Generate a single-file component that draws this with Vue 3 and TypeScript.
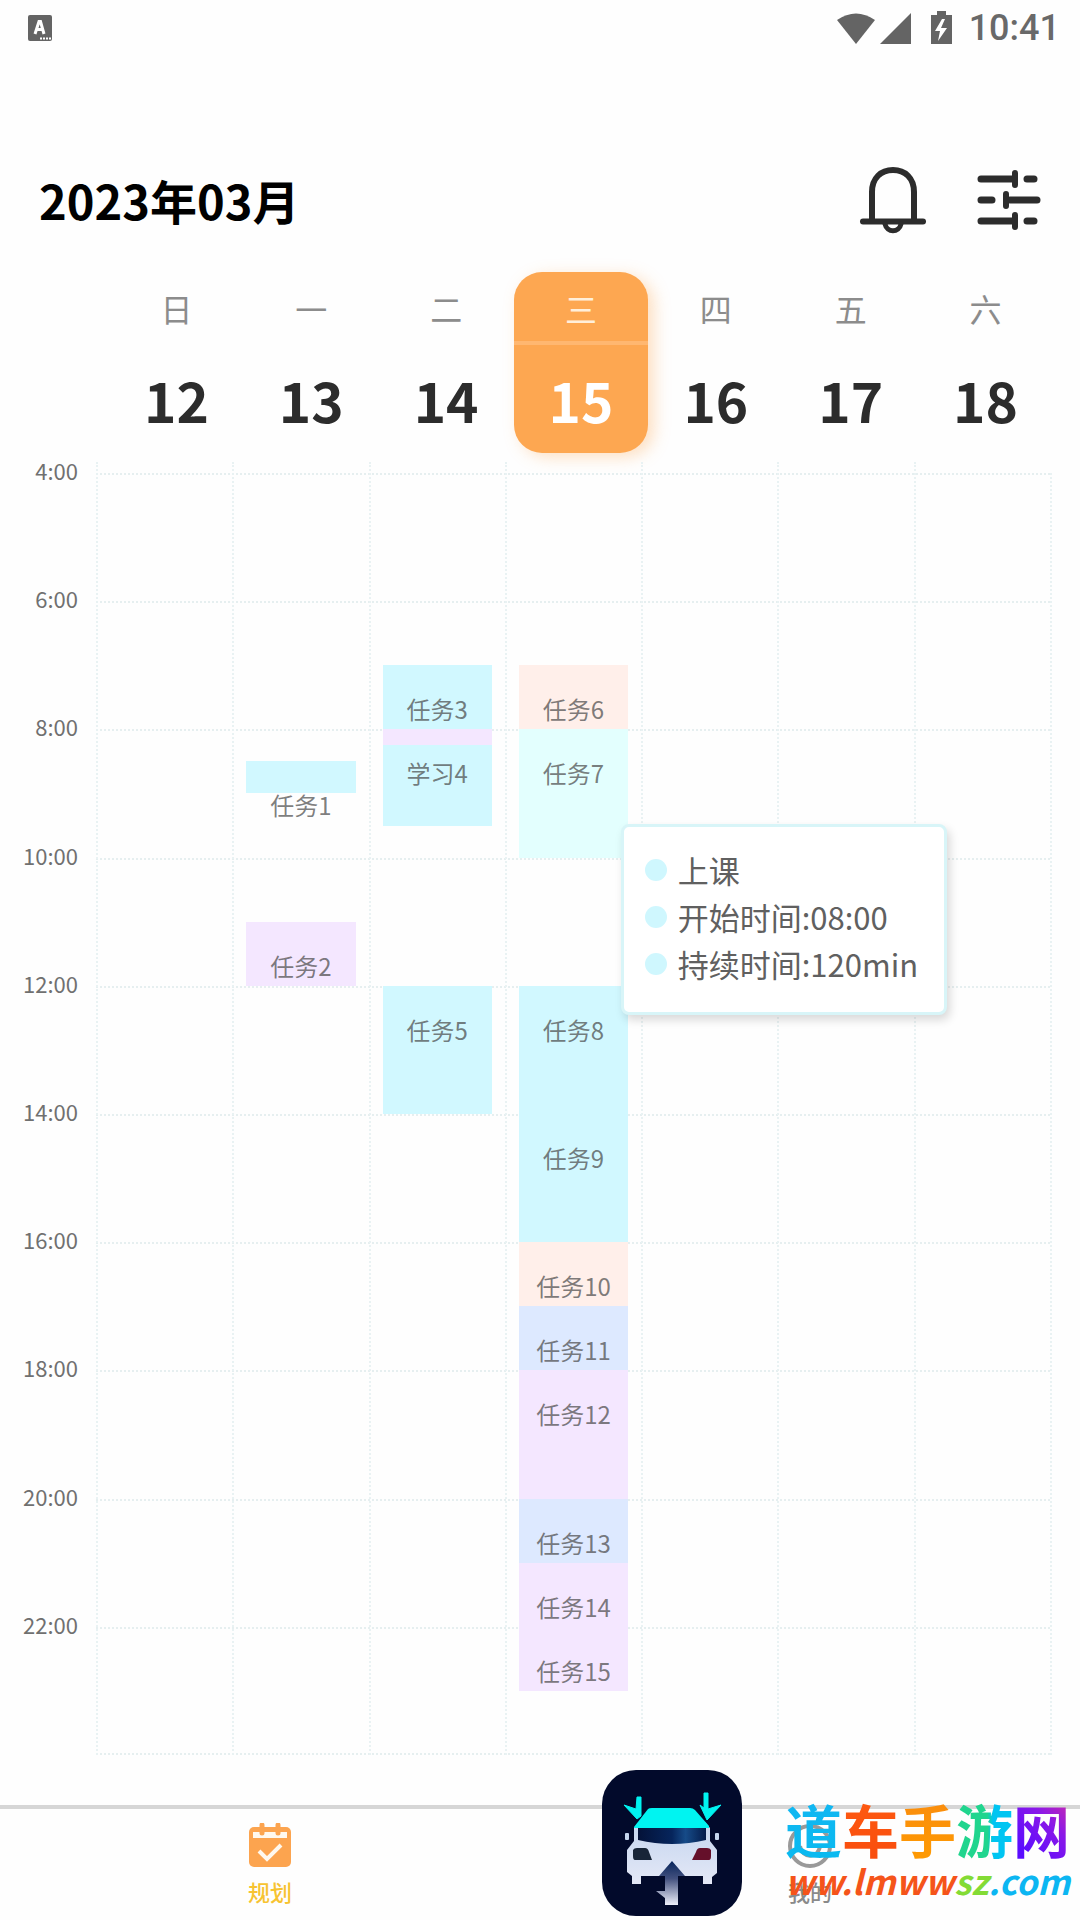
<script setup lang="ts">
import { ref } from 'vue'

interface Day { name: string; date: number }
interface Task { label: string; day: number; start: number; end: number; tone: string }

const days: Day[] = [
  { name: '日', date: 12 },
  { name: '一', date: 13 },
  { name: '二', date: 14 },
  { name: '三', date: 15 },
  { name: '四', date: 16 },
  { name: '五', date: 17 },
  { name: '六', date: 18 },
]
const selected = ref(15)

const firstHour = 4
const hours = [4, 6, 8, 10, 12, 14, 16, 18, 20, 22]

const tasks: Task[] = [
  { label: '任务1', day: 1, start: 8.5, end: 9, tone: 'cyan' },
  { label: '任务2', day: 1, start: 11, end: 12, tone: 'purple' },
  { label: '任务3', day: 2, start: 7, end: 8, tone: 'cyan' },
  { label: '学习4', day: 2, start: 8, end: 9.5, tone: 'cyan' },
  { label: '', day: 2, start: 8, end: 8.25, tone: 'purple' },
  { label: '任务5', day: 2, start: 12, end: 14, tone: 'cyan' },
  { label: '任务6', day: 3, start: 7, end: 8, tone: 'peach' },
  { label: '任务7', day: 3, start: 8, end: 10, tone: 'mint' },
  { label: '任务8', day: 3, start: 12, end: 14, tone: 'cyan' },
  { label: '任务9', day: 3, start: 14, end: 16, tone: 'cyan' },
  { label: '任务10', day: 3, start: 16, end: 17, tone: 'peach' },
  { label: '任务11', day: 3, start: 17, end: 18, tone: 'blue' },
  { label: '任务12', day: 3, start: 18, end: 20, tone: 'purple' },
  { label: '任务13', day: 3, start: 20, end: 21, tone: 'blue' },
  { label: '任务14', day: 3, start: 21, end: 22, tone: 'purple' },
  { label: '任务15', day: 3, start: 22, end: 23, tone: 'purple' },
]

const details = ['上课', '开始时间:08:00', '持续时间:120min']

// The canvas is divided into quarter-hour rows.
const rowOf = (hour: number) => (hour - firstHour) * 4 + 1
const place = (t: Task) => ({
  gridColumn: String(t.day + 1),
  gridRow: `${rowOf(t.start)} / ${rowOf(t.end)}`,
})
</script>

<template>
  <div class="app">
    <div class="status">
      <svg class="app-mark" width="26" height="28" viewBox="0 0 26 28" aria-hidden="true">
        <rect x="1" y="1" width="24" height="26" rx="2" fill="#646464" />
        <path d="M8 20 12 7.500h1.500L17 20M9.500 15.500h6.500" fill="none" stroke="#fff" stroke-width="3" />
        <path d="M13 24.500h11" stroke="#fff" stroke-width="2" stroke-dasharray="2 1" />
      </svg>
      <div class="status-right">
        <svg width="115" height="36" viewBox="0 0 115 36" fill="#646464" aria-hidden="true">
          <path d="M0 10Q19-3 38 10L19 34Z" />
          <path d="M43 34 74 3V34Z" />
          <path d="M94 5h6V1h9v4h6v29H94Z" />
          <path d="M105 9 98 21h5l-2 10 9-13h-6l4-9Z" fill="#fff" />
        </svg>
        <time>10:41</time>
      </div>
    </div>

    <header class="header">
      <h1>2023年03月</h1>
      <div class="actions">
        <button type="button" aria-label="提醒">
          <svg width="68" height="68" viewBox="0 0 68 68" fill="none" stroke="#2c2c2c" stroke-width="6" stroke-linecap="round">
            <path d="M13 55V26C13 12 22 4 34 4s21 8 21 22v29" />
            <path d="M4 55.500h60" />
            <path d="M26 58c2 9 14 9 16 0" stroke-width="5" />
          </svg>
        </button>
        <button type="button" aria-label="筛选">
          <svg width="64" height="64" viewBox="0 0 64 64" fill="none" stroke="#2c2c2c" stroke-width="7" stroke-linecap="round">
            <path d="M4 11h33M50 11h7M4 32h11M33 32h27M4 53h33M50 53h7" />
            <path d="M38 5v12M29 26v12M38 47v12" stroke-width="6" />
          </svg>
        </button>
      </div>
    </header>

    <div class="week">
      <button
        v-for="d in days"
        :key="d.date"
        type="button"
        class="day"
        :class="{ active: d.date === selected }"
        @click="selected = d.date"
      >
        <span class="day-name">{{ d.name }}</span>
        <span class="day-date">{{ d.date }}</span>
      </button>
    </div>

    <main class="board">
      <div class="axis">
        <span v-for="h in hours" :key="h">{{ h }}:00</span>
      </div>
      <div class="canvas">
        <i
          v-for="h in [...hours, 24]"
          :key="'h' + h"
          class="line-h"
          :class="{ last: h === 24 }"
          :style="{ gridRow: h === 24 ? '80' : `${rowOf(h)}` }"
        ></i>
        <i v-for="(d, n) in days" :key="'v' + n" class="line-v" :style="{ gridColumn: `${n + 1}` }"></i>
        <div v-for="(t, n) in tasks" :key="n" class="task" :class="t.tone" :style="place(t)">{{ t.label }}</div>
        <ul class="tooltip">
          <li v-for="text in details" :key="text">{{ text }}</li>
        </ul>
      </div>
    </main>

    <nav class="tabs">
      <a href="#plan" class="tab current">
        <svg width="44" height="46" viewBox="0 0 44 46" aria-hidden="true">
          <rect x="1" y="4" width="42" height="40" rx="5" fill="#fca44f" />
          <path d="M5 9h34v6H5z" fill="#fff8ee" />
          <path d="M14 2v8M30 2v8" stroke="#fca44f" stroke-width="5" stroke-linecap="round" />
          <path d="m11 28 8 8 14-14" fill="none" stroke="#fff8ee" stroke-width="4" />
        </svg>
        <span>规划</span>
      </a>
      <a href="#mine" class="tab">
        <svg width="48" height="46" viewBox="0 0 48 46" fill="none" stroke="#999" stroke-width="4" aria-hidden="true">
          <circle cx="24" cy="23" r="20" />
          <path d="M14 23c2 13 18 13 20 0" />
        </svg>
        <span>我的</span>
      </a>

      <div class="brand">
        <svg class="brand-logo" width="140" height="146" viewBox="0 0 140 146" aria-hidden="true">
          <defs>
            <linearGradient id="body" x1="0" y1="0" x2="0" y2="1">
              <stop offset="0" stop-color="#c4d5ef" /><stop offset="1" stop-color="#e4e8f6" />
            </linearGradient>
            <linearGradient id="glass">
              <stop offset="0" stop-color="#041238" /><stop offset=".5" stop-color="#06255c" />
              <stop offset=".7" stop-color="#164b88" /><stop offset="1" stop-color="#051c4b" />
            </linearGradient>
            <linearGradient id="arrow" x1="0" y1="0" x2="0" y2="1">
              <stop offset="0" stop-color="#07245b" /><stop offset=".4" stop-color="#43517f" />
              <stop offset="1" stop-color="#eef0fa" />
            </linearGradient>
          </defs>
          <rect width="140" height="146" rx="34" fill="#020a2b" />
          <path d="M32 58 37 52H103L108 58V71L115 80V103L110 107V114H101V106H39V114H30V106L25 102V80L32 71Z" fill="url(#body)" />
          <path d="M32 57 46 39Q47 38 50 38H88Q91 38 93 40L107 56V58H32Z" fill="#00f4f1" />
          <path d="M36 58H104V70Q87 74 70 74T36 70Z" fill="url(#glass)" />
          <path d="M31 80Q32 78 35 78H43Q46 78 47 82L50 90H33Q31 90 31 86Z" fill="#182538" />
          <path d="M109 80Q108 78 105 78H98Q95 78 94 82L90 90H107Q109 90 109 86Z" fill="#65102a" />
          <rect x="23" y="63" width="4" height="7" rx="1" fill="#c6d6ed" />
          <rect x="113" y="63" width="4" height="7" rx="1" fill="#c6d6ed" />
          <path d="M35 27H39V46L35 49 22 35 34 39Z" fill="#00f4f1" stroke="#00f4f1" />
          <path d="M102 23H106V39L119 35 105 50 98 35 102 38Z" fill="#00f4f1" stroke="#00f4f1" />
          <path d="M70 91 83 106H76V135H63V128L54 121H63V106H57Z" fill="url(#arrow)" />
        </svg>
        <div class="brand-text">
          <div class="brand-name">
            <span class="c1">道</span><span class="c2">车</span><span class="c3">手</span><span class="c4">游</span><span class="c5">网</span>
          </div>
          <div class="brand-url">ww.lmww<span class="green">sz</span><span class="azure">.com</span></div>
        </div>
      </div>
    </nav>
  </div>
</template>

<style>
body {
  margin: 0;
  background: #fefefe;
}
</style>

<style scoped>
.app {
  display: flex;
  flex-direction: column;
  min-height: 100vh;
  overflow: hidden;
  font-family: "Noto Sans CJK SC", "Noto Sans", sans-serif;
  color: #2c2c2c;
}
button {
  padding: 0;
  border: 0;
  background: none;
  font: inherit;
  color: inherit;
  cursor: pointer;
}
svg {
  display: block;
}
.status {
  display: flex;
  justify-content: space-between;
  align-items: center;
  height: 56px;
  padding: 0 20px 0 27px;
}
.status-right {
  display: flex;
  align-items: center;
  gap: 17px;
}
.status time {
  font: 500 36px/40px Roboto, sans-serif;
  color: #696969;
}
.header {
  display: flex;
  justify-content: space-between;
  align-items: center;
  height: 80px;
  margin-top: 104px;
  padding: 0 39px;
}
h1 {
  margin: 0;
  font-size: 47px;
  line-height: 64px;
  font-weight: 700;
  color: #000;
}
.actions {
  display: flex;
  align-items: center;
  gap: 50px;
}
.week {
  display: grid;
  grid-template-columns: repeat(7, 1fr);
  margin: 32px 27px 0 109px;
}
.day {
  display: flex;
  flex-direction: column;
  height: 181px;
  border-radius: 28px;
  text-align: center;
}
.day-name {
  height: 69px;
  width: 100%;
  border-bottom: 4px solid transparent;
  font-size: 32px;
  line-height: 73px;
  color: #8c8c8c;
}
.day-date {
  width: 100%;
  font-size: 55px;
  line-height: 108px;
  font-weight: 700;
}
.day.active {
  background: #fda751;
  color: #fff;
  box-shadow: 6px 4px 16px rgba(253, 167, 81, 0.35);
}
.active .day-name {
  border-color: #ffb770;
  color: #ffefda;
}
.board {
  display: grid;
  grid-template-columns: 78px 1fr;
  grid-template-rows: 100%;
  column-gap: 18px;
  height: 1282px;
  margin: 20px 28px 0 0;
}
.axis {
  display: grid;
  grid-template-rows: repeat(10, 1fr);
  margin-top: -18px;
  margin-bottom: 18px;
  text-align: right;
  font-size: 22px;
  line-height: 30px;
  color: #707070;
}
.canvas {
  position: relative;
  display: grid;
  grid-template-columns: repeat(7, minmax(0, 1fr));
  grid-template-rows: repeat(80, minmax(0, 1fr));
  border-right: 2px dotted #e9f2f3;
}
.line-h {
  grid-column: 1 / -1;
  border-top: 2px dotted #e6eff0;
}
.line-h.last {
  border-top: 0;
  border-bottom: 2px dotted #e6eff0;
}
.line-v {
  grid-row: 1 / -1;
  margin-top: -11px;
  border-left: 2px dotted #e9f2f3;
}
.task {
  box-sizing: border-box;
  margin: 0 13px 0 14px;
  padding-top: 28px;
  font-size: 24px;
  line-height: 32px;
  text-align: center;
  white-space: nowrap;
  color: rgba(70, 70, 70, 0.7);
}
.task:empty {
  padding: 0;
}
.cyan { background: #d1f8ff; }
.purple { background: #f4e7ff; }
.peach { background: #ffefea; }
.mint { background: #e3fffe; }
.blue { background: #dde9ff; }
.tooltip {
  position: absolute;
  top: 351px;
  left: 55%;
  margin: 0;
  padding: 19px 26px 25px 21px;
  border: 3px solid #d8f5f8;
  border-radius: 8px;
  background: #fff;
  box-shadow: 3px 5px 10px rgba(0, 0, 0, 0.15);
  list-style: none;
  font-size: 31px;
  line-height: 47px;
  color: #606060;
  white-space: nowrap;
}
.tooltip li {
  display: flex;
  align-items: center;
  gap: 11px;
}
.tooltip li::before {
  content: "";
  width: 22px;
  height: 22px;
  border-radius: 50%;
  background: #cff7fe;
}
.tabs {
  position: relative;
  display: grid;
  grid-template-columns: 1fr 1fr;
  height: 111px;
  margin-top: auto;
  border-top: 4px solid #d6d6d6;
}
.tab {
  display: flex;
  flex-direction: column;
  align-items: center;
  padding-top: 14px;
  font-size: 22px;
  line-height: 32px;
  gap: 6px;
  font-weight: 500;
  color: #8a8a8a;
  text-decoration: none;
}
.tab.current {
  color: #f7c331;
}
.brand {
  position: absolute;
  right: 10px;
  bottom: 4px;
  display: flex;
  align-items: flex-end;
  gap: 43px;
}
.brand-text {
  width: 285px;
  height: 120px;
}
.brand-name {
  font-size: 57px;
  line-height: 64px;
  font-weight: 700;
  white-space: nowrap;
}
.brand-name span {
  background-clip: text;
  -webkit-background-clip: text;
  color: transparent;
}
.c1 { background-image: linear-gradient(#13b6f2, #08baf0); }
.c2 { background-image: linear-gradient(#ff5c12, #f84b0d); }
.c3 { background-image: linear-gradient(#f98a10, #ff9c00); }
.c4 { background-image: linear-gradient(90deg, #20d58e 55%, #00c5f2 65%); }
.c5 { background-image: linear-gradient(45deg, #5a0cff 20%, #8a18e8 60%, #e0309a); }
.brand-url {
  font-size: 34px;
  line-height: 42px;
  font-weight: 700;
  font-style: italic;
  white-space: nowrap;
  color: #f5541a;
}
.green { color: #83db35; }
.azure { color: #0cb6f2; }
</style>
